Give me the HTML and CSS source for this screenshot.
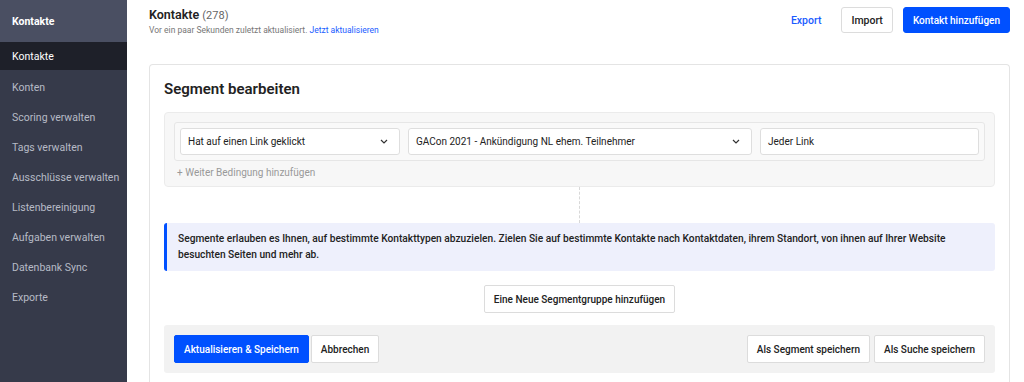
FILE: index.html
```html
<!DOCTYPE html>
<html lang="de">
<head>
  <meta charset="UTF-8">
  <title>Kontakte</title>
  <link rel="stylesheet" href="styles.css">
</head>
<body>
  <div id="app">
    <aside id="sidebar">
      <div class="sidebar-title">Kontakte</div>
      <nav class="sidebar-nav">
        <a class="nav-item active">Kontakte</a>
        <a class="nav-item">Konten</a>
        <a class="nav-item">Scoring verwalten</a>
        <a class="nav-item">Tags verwalten</a>
        <a class="nav-item">Ausschlüsse verwalten</a>
        <a class="nav-item">Listenbereinigung</a>
        <a class="nav-item">Aufgaben verwalten</a>
        <a class="nav-item">Datenbank Sync</a>
        <a class="nav-item">Exporte</a>
      </nav>
    </aside>

    <main id="main">
      <header class="page-header">
        <div>
          <h1 class="page-title">Kontakte <span class="count">(278)</span></h1>
          <p class="page-sub">Vor ein paar Sekunden zuletzt aktualisiert. <a class="link">Jetzt aktualisieren</a></p>
        </div>
        <div class="header-actions">
          <a class="link-btn">Export</a>
          <button class="btn">Import</button>
          <button class="btn btn-primary">Kontakt hinzufügen</button>
        </div>
      </header>

      <section class="card">
        <h2 class="card-title">Segment bearbeiten</h2>

        <div class="group">
          <div class="condition">
            <div class="select sel-type">Hat auf einen Link geklickt <span class="chev"><svg width="8" height="5" viewBox="0 0 8 5"><path d="M1 1l3 3 3-3" fill="none" stroke="#333" stroke-width="1.2"/></svg></span></div>
            <div class="select sel-mail">GACon 2021 - Ankündigung NL ehem. Teilnehmer <span class="chev"><svg width="8" height="5" viewBox="0 0 8 5"><path d="M1 1l3 3 3-3" fill="none" stroke="#333" stroke-width="1.2"/></svg></span></div>
            <div class="input">Jeder Link</div>
          </div>
          <div class="add-cond">+ Weiter Bedingung hinzufügen</div>
        </div>

        <div class="connector"></div>

        <div class="info">
          Segmente erlauben es Ihnen, auf bestimmte Kontakttypen abzuzielen. Zielen Sie auf bestimmte Kontakte nach Kontaktdaten, ihrem Standort, von ihnen auf Ihrer Website besuchten Seiten und mehr ab.
        </div>

        <div class="center-row">
          <button class="btn btn-sm">Eine Neue Segmentgruppe hinzufügen</button>
        </div>

        <div class="footer-bar">
          <div class="footer-left">
            <button class="btn btn-sm btn-primary">Aktualisieren &amp; Speichern</button>
            <button class="btn btn-sm">Abbrechen</button>
          </div>
          <div class="footer-right">
            <button class="btn btn-sm">Als Segment speichern</button>
            <button class="btn btn-sm">Als Suche speichern</button>
          </div>
        </div>
      </section>
    </main>
  </div>
</body>
</html>
```

FILE: styles.css
```css
* {
  margin: 0;
  padding: 0;
  box-sizing: border-box;
  font-family: 'Roboto', 'Liberation Sans', sans-serif;
}

html,
body {
  height: 100%;
  overflow: hidden;
}

#app {
  display: flex;
  height: 100%;
}

#sidebar {
  width: 127px;
  flex-shrink: 0;
  background-color: #363a4a;
  color: #b7bac6;
  font-size: 10.5px;
}

.sidebar-title {
  height: 42px;
  display: flex;
  align-items: center;
  padding: 0 12px;
  background-color: #4a4f62;
  color: #fff;
  font-weight: 700;
  font-size: 10.5px;
}

.sidebar-nav {
  display: flex;
  flex-direction: column;
}

.nav-item {
  height: 30px;
  display: flex;
  align-items: center;
  padding: 0 12px;
  white-space: nowrap;
}

.nav-item.active {
  height: 28px;
  margin-bottom: 2px;
  background-color: #1e2029;
  color: #fff;
}

#main {
  flex: 1;
  display: flex;
  flex-direction: column;
  padding: 0 14px 0 22px;
  color: #222;
}

.page-header {
  display: flex;
  justify-content: space-between;
  align-items: flex-start;
  padding-top: 7px;
  height: 64px;
  flex-shrink: 0;
}

.page-title {
  font-size: 12.5px;
  font-weight: 600;
}

.page-title .count {
  font-weight: 400;
  font-size: 11px;
  color: #666;
}

.page-sub {
  font-size: 8.5px;
  color: #777;
  margin-top: 3px;
}

.link {
  color: #1a5cff;
}

.header-actions {
  display: flex;
  align-items: center;
  gap: 10px;
}

.link-btn {
  color: #1a5cff;
  font-size: 10.5px;
  font-weight: 500;
  margin-right: 10px;
}

.btn {
  height: 26px;
  padding: 0 9px;
  background-color: #fff;
  border: 1px solid #dcdcdc;
  border-radius: 3px;
  color: #222;
  font-size: 10.5px;
  font-weight: 500;
  cursor: pointer;
}

.header-actions .btn-primary {
  font-size: 10px;
  padding: 0 9px;
}

.btn-primary {
  background-color: #0050ff;
  border-color: #0050ff;
  color: #fff;
}

.btn-sm {
  height: 28px;
  font-size: 10px;
  padding: 0 9px;
  border-radius: 2px;
}

.card {
  flex: 1;
  overflow: hidden;
  border: 1px solid #e4e4e4;
  border-bottom: none;
  border-radius: 4px 4px 0 0;
  padding: 14px 14px 0 14px;
}

.card-title {
  font-size: 15px;
  font-weight: 600;
  color: #222;
  margin-bottom: 13px;
  line-height: 20px;
}

.group {
  background-color: #f7f7f7;
  border: 1px solid #ebebeb;
  border-radius: 4px;
  padding: 9px 9px 4px 9px;
}

.condition {
  display: flex;
  gap: 8px;
  background-color: #f9f9f9;
  border: 1px solid #e6e6e6;
  border-radius: 3px;
  padding: 5px;
}

.select,
.input {
  height: 27px;
  display: flex;
  align-items: center;
  padding: 0 7px;
  background-color: #fff;
  border: 1px solid #dedede;
  border-radius: 3px;
  font-size: 10px;
  color: #222;
}

.select {
  justify-content: space-between;
}

.sel-type {
  width: 220px;
}

.sel-mail {
  width: 344px;
}

.input {
  flex: 1;
}

.chev {
  display: flex;
  margin-right: 4px;
}

.add-cond {
  font-size: 10px;
  color: #999;
  padding: 6px 3px 0 3px;
  height: 21px;
}

.connector {
  width: 0;
  height: 36px;
  margin: 0 auto;
  border-left: 1px dashed #d8d8d8;
}

.info {
  background-color: #eef0fc;
  border-left: 3px solid #0050ff;
  border-radius: 3px;
  padding: 8px 22px 8px 11px;
  font-size: 10.2px;
  font-weight: 500;
  line-height: 16px;
  color: #222;
}

.center-row {
  display: flex;
  justify-content: center;
  padding: 14px 0 12px 0;
}

.footer-bar {
  display: flex;
  justify-content: space-between;
  background-color: #f2f2f2;
  border-radius: 3px;
  padding: 10px 10px;
}

.footer-left {
  display: flex;
  gap: 2px;
}

.footer-right {
  display: flex;
  gap: 4px;
}
```
